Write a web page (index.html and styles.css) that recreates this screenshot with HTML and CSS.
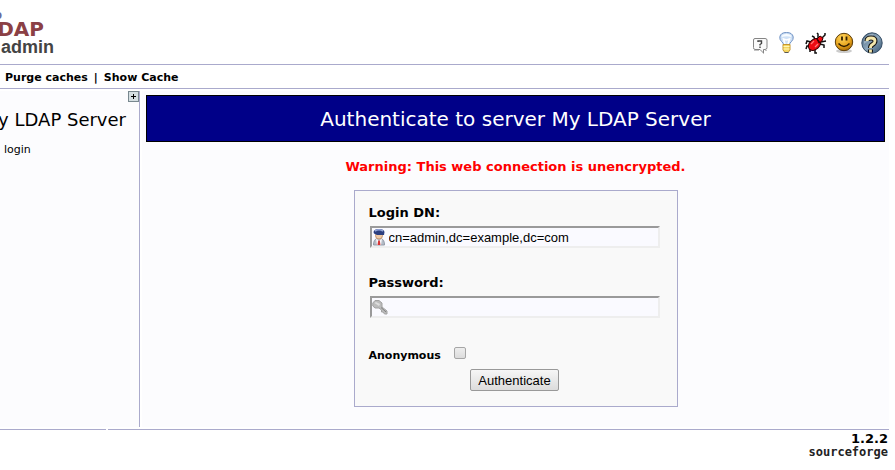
FILE: index.html
```html
<!DOCTYPE html>
<html lang="en">
<head>
  <meta charset="UTF-8">
  <meta name="viewport" content="width=device-width, initial-scale=1.0">
  <title>phpLDAPadmin (1.2.2)</title>
  <link rel="stylesheet" href="styles.css">
</head>
<body>
  <header class="head">
    <div class="logo">
      <span class="logo-php">php</span>
      <span class="logo-ldap">LDAP</span>
      <span class="logo-admin">admin</span>
    </div>
    <nav class="icons">
      <a href="#" title="Forum">
        <svg width="22" height="24" viewBox="0 0 22 24">
          <path d="M6 7.500H16Q18 7.500 18 9V16.500Q18 18.500 16 18.500H14.500V22L11 18.500H6Q4.500 18.500 4.500 16.500V9Q4.500 7.500 6 7.500Z" fill="#fafafa" stroke="#858585"/>
          <path d="M5 19.500H10M12 20L15 23M16 19.500H18" stroke="#c4c4c4" fill="none"/>
          <path d="M9 11V10H12.500V12.500L11 13.500V14.500M11 15.500V17" stroke="#444" stroke-width="1.400" fill="none"/>
        </svg>
      </a>
      <a href="#" title="Request feature">
        <svg width="22" height="24" viewBox="0 0 22 24">
          <path d="M6.500 14Q6.500 12 4.500 10.500Q2.500 8.500 2.800 6Q3.500 1.500 9.500 1.500T16.200 6Q16.500 8.500 14.500 10.500Q12.500 12 12.500 14Z" fill="#cfe1f6" stroke="#6f92c4"/>
          <path d="M4.500 6Q5 3 9.500 3T14.500 6Q10 4.500 4.500 6Z" fill="#f8fcff"/>
          <path d="M8 13L6.500 8L9.500 9L12.500 8L11 13" fill="none" stroke="#fff" stroke-width="1.600"/>
          <path d="M6 13.500H13V19L11 21.500H8L6 19Z" fill="#f4d660" stroke="#c5962e"/>
          <path d="M6.500 15.500H12.500M6.500 18H12.500" stroke="#fff6b8"/>
          <path d="M7.500 21.500H11.500" stroke="#555"/>
        </svg>
      </a>
      <a href="#" title="Report a bug">
        <svg width="22" height="24" viewBox="0 0 22 24">
          <path d="M6 11L2 10L1 13M7 15L2 15L1 18M8 17L5 19V21M10 18V22H12M10 9L9 6L7 5M13 7V3L12 2M16 8L20 4V2M16 11L21 10M15 13L19 14V17" fill="none" stroke="#111" stroke-width="1.500"/>
          <ellipse cx="9.500" cy="13.500" rx="7" ry="5" transform="rotate(-42 9.500 13.500)" fill="#ee0a12" stroke="#300"/>
          <path d="M12 8L15 5L18 7L17 10L14 12Z" fill="#ee0a12" stroke="#300"/>
          <path d="M12 8L15 12" stroke="#400" stroke-width="1.300"/>
          <path d="M6 13L9 10M10 16L13 13" stroke="#ff7775" stroke-width="1.300"/>
        </svg>
      </a>
      <a href="#" title="Donate">
        <svg width="22" height="24" viewBox="0 0 22 24">
          <defs>
            <radialGradient id="smile" cx=".4" cy=".25" r=".8"><stop stop-color="#ffd55c"/><stop offset=".6" stop-color="#e8a51e"/><stop offset="1" stop-color="#a66600"/></radialGradient>
          </defs>
          <ellipse cx="11" cy="20" rx="8" ry="2" fill="#ccc"/>
          <circle cx="11" cy="11" r="8.700" fill="url(#smile)" stroke="#5c3d09"/>
          <path d="M9 5.500V9.500M13.500 5.500V9.500" stroke="#332000" stroke-width="1.800"/>
          <path d="M5.500 12.500Q11 18.500 16.500 12.500" fill="none" stroke="#332000" stroke-width="1.500"/>
        </svg>
      </a>
      <a href="#" title="Help">
        <svg width="22" height="24" viewBox="0 0 22 24">
          <defs>
            <linearGradient id="help" x2="1" y2="1"><stop stop-color="#46637e"/><stop offset=".5" stop-color="#8ba5ba"/><stop offset="1" stop-color="#31506d"/></linearGradient>
          </defs>
          <circle cx="11" cy="12" r="10.200" fill="url(#help)" stroke="#354d65"/>
          <path d="M3 8Q7 2 13 3Q10 9 3 13Z" fill="#b4c6d4" opacity=".6"/>
          <path d="M6 10Q6 7 10 7T14 10Q14 12 11.500 13.500Q9.500 14.500 9.500 17M9.500 18.500V21.500" fill="none" stroke="#171717" stroke-width="5"/>
          <path d="M6 10Q6 7 10 7T14 10Q14 12 11.500 13.500Q9.500 14.500 9.500 17M9.500 18.500V21.500" fill="none" stroke="#f5e8ad" stroke-width="2.800"/>
        </svg>
      </a>
    </nav>
  </header>

  <nav class="control">
    <a href="#">Purge caches</a>
    <span>|</span>
    <a href="#">Show Cache</a>
  </nav>

  <div class="columns">
    <aside class="tree">
      <button class="expand" type="button" title="Expand">
        <svg width="9" height="9" viewBox="0 0 9 9"><path d="M2 4.500H7M4.500 2V7" stroke="#000"/></svg>
      </button>
      <h2>My LDAP Server</h2>
      <a class="login" href="#">login</a>
    </aside>

    <main class="body">
      <h1>Authenticate to server My LDAP Server</h1>
      <p class="warning">Warning: This web connection is unencrypted.</p>
      <form class="auth">
        <label for="login">Login DN:</label>
        <div class="field">
          <svg width="16" height="18" viewBox="0 0 16 18">
            <path d="M1.500 17Q1.500 11.500 5 10.500H9Q12.500 11.500 12.500 17Z" fill="#b5bdc8" stroke="#9299a5"/>
            <path d="M4 10.500L7 13L10 10.500L9 17H5Z" fill="#f7f7fa"/>
            <path d="M6.200 12.500H7.800L8.500 17H5.500Z" fill="#d83535"/>
            <circle cx="7" cy="7.500" r="3.500" fill="#efc9a4" stroke="#c59572"/>
            <path d="M1.500 4Q2 1 7 1T12.500 4L12 7H5L2 5.500Z" fill="#2c3f80"/>
            <path d="M3 3Q7 .5 11 3" fill="none" stroke="#93a5d8" stroke-width="1.500"/>
          </svg>
          <input id="login" type="text" value="cn=admin,dc=example,dc=com">
        </div>
        <label for="password">Password:</label>
        <div class="field">
          <svg width="16" height="18" viewBox="0 0 16 18">
            <path d="M.8 5L3 2.500H7L10 5V9L15 13V16H12.500L11 14H9.500V12L7 10H3L.8 8Z" fill="#bcbcbc" stroke="#a2a2a2"/>
            <path d="M2.500 5L4 4L8 6L7 8Z" fill="#dedede"/>
            <path d="M9 9.500L14 14" stroke="#808080"/>
          </svg>
          <input id="password" type="password">
        </div>
        <div class="anonymous">
          <label for="anon">Anonymous</label>
          <input id="anon" type="checkbox">
        </div>
        <button class="submit" type="submit">Authenticate</button>
      </form>
    </main>
  </div>

  <footer class="foot">
    <div class="foot-left"></div>
    <div class="foot-right">
      <span>1.2.2</span>
      <a class="sourceforge" href="#">sourceforge</a>
    </div>
  </footer>
</body>
</html>
```
FILE: styles.css
```css
body {
  margin: 0 6px 0 0;
  background-color: #fff;
  color: #000;
  font-family: Verdana, "DejaVu Sans", sans-serif;
  font-size: 11px;
  overflow-x: hidden;
}

* {
  box-sizing: border-box;
}

a {
  color: inherit;
  text-decoration: none;
}

.head {
  display: flex;
  justify-content: space-between;
  align-items: flex-end;
  height: 65px;
  border-bottom: 1px solid #aaaacc;
}

.logo {
  display: flex;
  flex-direction: column;
  align-items: flex-end;
  width: 54px;
  padding-bottom: 8px;
  font-weight: bold;
}

.logo-php {
  margin-right: 52px;
  color: #6b6b9f;
  font-size: 12px;
  line-height: 10px;
}

.logo-ldap {
  margin-right: 10px;
  color: #8b4045;
  font-size: 20px;
  line-height: 18px;
}

.logo-admin {
  color: #444;
  font-family: "Liberation Sans Narrow", "Liberation Sans", sans-serif;
  font-size: 18px;
  line-height: 18px;
}

.icons {
  display: flex;
  gap: 6px;
  padding: 0 6px 9px 0;
}

.icons svg {
  display: block;
}

.control {
  display: flex;
  gap: 6px;
  padding: 6px 5px 4px;
  border-bottom: 1px solid #aaaacc;
  font-weight: bold;
  line-height: 13px;
}

.columns {
  display: flex;
  gap: 2px;
  margin: 2px 0;
  min-height: 336px;
}

.tree {
  display: flex;
  flex-direction: column;
  align-items: flex-end;
  width: 140px;
  flex-shrink: 0;
  background-color: #fcfcfe;
  border-right: 1px solid #aaaacc;
  white-space: nowrap;
}

.expand {
  display: flex;
  width: 9px;
  height: 9px;
  margin: 1px 1px 0 0;
  padding: 0;
  border: 0;
  background-color: #d5dfe2;
  outline: 1px solid #78888f;
}

.tree h2 {
  margin: 7px 13px 0 0;
  font-size: 18px;
  font-weight: normal;
  line-height: 24px;
}

.login {
  align-self: flex-start;
  margin: 10px 0 0 4px;
  line-height: 16px;
}

.body {
  flex: 1;
  padding: 4px;
  background-color: #fcfcfe;
}

.body h1 {
  margin: 0;
  padding: 11px 10px 10px;
  border: 1px solid #000;
  background-color: #000088;
  color: #fff;
  font-size: 20px;
  font-weight: normal;
  line-height: 24px;
  text-align: center;
}

.warning {
  margin: 17px 0 15px;
  color: #f00;
  font-size: 13px;
  font-weight: bold;
  line-height: 16px;
  text-align: center;
}

.auth {
  display: flex;
  flex-direction: column;
  width: 324px;
  margin: 0 auto;
  padding: 14px 16px 15px 14px;
  border: 1px solid #aaaacc;
  background-color: #f9f9f9;
}

.auth > label {
  font-size: 13px;
  font-weight: bold;
  line-height: 16px;
}

.field {
  display: flex;
  align-items: center;
  height: 22px;
  margin: 5px 1px 27px;
  border: 2px solid;
  border-color: #9a9a9a #eee #eee #9a9a9a;
  background-color: #fafaff;
}

.field input {
  flex: 1;
  padding: 0 0 0 1px;
  border: 0;
  outline: 0;
  background: none;
  font-family: Arial, "Liberation Sans", sans-serif;
  font-size: 13px;
}

.anonymous {
  display: flex;
  align-items: flex-start;
  gap: 13px;
  font-weight: bold;
  line-height: 22px;
}

.anonymous input {
  appearance: none;
  width: 12px;
  height: 12px;
  margin: 2px 0 0;
  border: 1px solid #a6a6a6;
  border-radius: 2px;
  background: linear-gradient(#eee, #dcdcdc);
}

.submit {
  align-self: center;
  height: 22px;
  margin-top: 2px;
  padding: 0 7px;
  border: 1px solid #999;
  border-radius: 2px;
  background: linear-gradient(#f6f6f6, #dcdcdc);
  color: #000;
  font-family: Arial, "Liberation Sans", sans-serif;
  font-size: 13px;
}

.foot {
  display: flex;
  gap: 2px;
}

.foot-left {
  width: 106px;
  border-top: 1px solid #aaaacc;
}

.foot-right {
  display: flex;
  flex: 1;
  flex-direction: column;
  align-items: flex-end;
  padding: 2px 1px;
  border-top: 1px solid #aaaacc;
  font-size: 13px;
  font-weight: bold;
  line-height: 14px;
}

.sourceforge {
  color: #222;
  font-family: "DejaVu Sans Mono", monospace;
  font-size: 12px;
  line-height: 12px;
}
```
